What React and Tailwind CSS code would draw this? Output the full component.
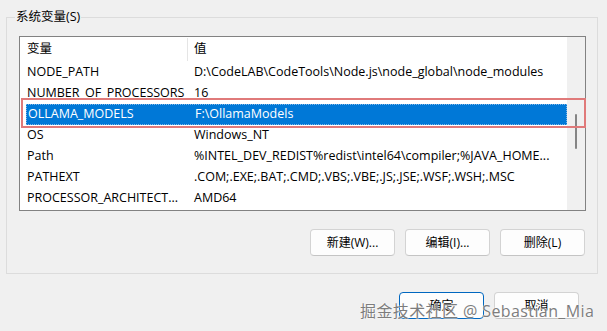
import React from "react";

const rows = [
  { name: "NODE_PATH", value: "D:\\CodeLAB\\CodeTools\\Node.js\\node_global\\node_modules" },
  { name: "NUMBER_OF_PROCESSORS", value: "16" },
  { name: "OLLAMA_MODELS", value: "F:\\OllamaModels", selected: true },
  { name: "OS", value: "Windows_NT" },
  { name: "Path", value: "%INTEL_DEV_REDIST%redist\\intel64\\compiler;%JAVA_HOME..." },
  { name: "PATHEXT", value: ".COM;.EXE;.BAT;.CMD;.VBS;.VBE;.JS;.JSE;.WSF;.WSH;.MSC" },
  { name: "PROCESSOR_ARCHITECT...", value: "AMD64" },
];

const font = "font-['Open_Sans','Noto_Sans_CJK_SC',sans-serif]";

const Button = ({ children, primary }) => (
  <button
    type="button"
    className={`w-[85px] h-[27px] rounded-[4px] bg-[#fdfdfd] text-[12px] text-black flex items-center justify-center border ${
      primary ? "border-[#0067c0]" : "border-[#d3d3d3] border-b-[#c4c4c4]"
    }`}
  >
    {children}
  </button>
);

export default function App() {
  return (
    <div className={`relative w-[607px] h-[331px] overflow-hidden bg-[#f0f0f0] pt-[17px] pl-[6px] ${font} text-[12.5px] text-black`}>
      {/* group box */}
      <div className="relative w-[592px] h-[257px] border border-[#dcdcdc] pl-[12px] pt-[18px]">
        <span className="absolute left-[8px] top-[-9px] bg-[#f0f0f0] px-[1px] leading-[16px]">系统变量(S)</span>

        {/* list view */}
        <div className="flex w-[567px] h-[175px] border border-[#828282] bg-white">
          <div className="flex-1 flex flex-col">
            <div className="flex h-[24px] items-center">
              <div className="w-[168px] h-[23px] pl-[7px] flex items-center border-r border-[#e5e5e5]">变量</div>
              <div className="pl-[6px]">值</div>
            </div>
            {rows.map((r) => (
              <div key={r.name} className="flex h-[21px] items-center pl-[6px] pt-[1px]">
                <div
                  className={`flex flex-1 h-[21px] items-center ${
                    r.selected ? "bg-[#0078d7] text-white border border-dotted border-[#7fb5e6]" : ""
                  }`}
                >
                  <div className="w-[162px] pl-[1px] whitespace-nowrap">{r.name}</div>
                  <div className="pl-[6px] whitespace-nowrap">{r.value}</div>
                </div>
              </div>
            ))}
          </div>
          {/* scrollbar */}
          <div className="w-[18px] bg-[#f0f0f0] flex justify-center pt-[77px]">
            <div className="w-[2px] h-[35px] bg-[#858585] rounded-full" />
          </div>
        </div>

        <div className="flex justify-end gap-[10px] pr-[12px] mt-[18px]">
          <Button>新建(W)...</Button>
          <Button>编辑(I)...</Button>
          <Button>删除(L)</Button>
        </div>
      </div>

      <div className="flex justify-end gap-[10px] pr-[28px] mt-[18px]">
        <Button primary>确定</Button>
        <Button>取消</Button>
      </div>

      {/* red highlight annotation */}
      <div className="absolute left-[21px] top-[98px] w-[565px] h-[30px] border-2 border-[#e07a7a]" />

      {/* watermark */}
      <div className="absolute left-[360px] top-[301px] text-[16px] leading-[20px] tracking-[0.4px] text-[#7d7d7d] whitespace-nowrap [text-shadow:0_0_2px_#ffffff,0_0_1px_#ffffff]">
        掘金技术社区 @ Sebastian_Mia
      </div>
    </div>
  );
}
